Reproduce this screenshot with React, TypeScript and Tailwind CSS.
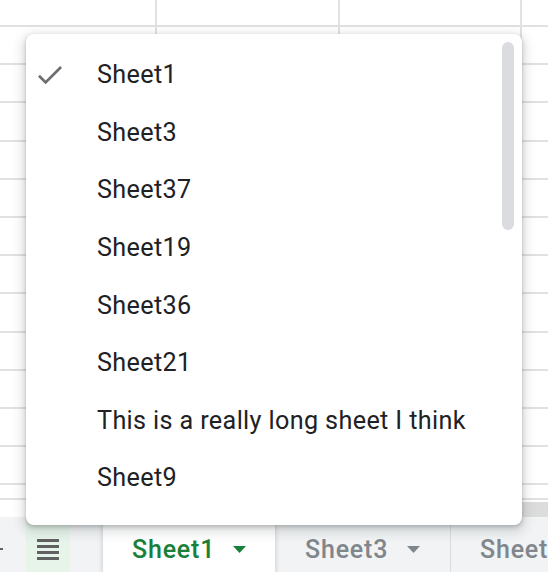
import React from "react";

const rows = Array.from({ length: 12 });
const items = [
  "Sheet1",
  "Sheet3",
  "Sheet37",
  "Sheet19",
  "Sheet36",
  "Sheet21",
  "This is a really long sheet I think",
  "Sheet9",
];

function GridRow({ first }: { first?: boolean }) {
  return (
    <div className={`flex shrink-0 border-b-2 border-[#e1e1e1] ${first ? "h-[27px]" : "h-[38.2px]"}`}>
      <div className="w-[157px] shrink-0 border-r-2 border-[#e1e1e1]" />
      <div className="w-[183px] shrink-0 border-r-2 border-[#e1e1e1]" />
      <div className="w-[182px] shrink-0 border-r-2 border-[#e1e1e1]" />
      <div className="flex-1" />
    </div>
  );
}

function Caret({ color }: { color: string }) {
  return (
    <svg width="13" height="7" viewBox="0 0 13 7" className="shrink-0">
      <path d="M0 0 L13 0 L6.5 7 Z" fill={color} />
    </svg>
  );
}

export default function App() {
  return (
    <div className="relative w-[548px] h-[572px] bg-white overflow-hidden font-['Roboto',sans-serif]">
      {/* grid */}
      <div className="flex h-[500px] flex-col overflow-hidden border-b-2 border-[#e1e1e1]">
        <GridRow first />
        {rows.map((_, i) => (
          <GridRow key={i} />
        ))}
      </div>
      {/* horizontal scrollbar strip */}
      <div className="h-[17px] pt-[2px]">
        <div className="ml-[300px] h-[15px] bg-[#dcdcdc]" />
      </div>
      {/* tab bar */}
      <div className="flex h-[55px] overflow-hidden bg-[#f1f3f4]">
        <div className="flex w-[26px] shrink-0 items-center pt-[9px]">
          <div className="h-[2px] w-[3px] bg-[#5f6368]" />
        </div>
        <div className="flex w-[44px] shrink-0 items-center justify-center bg-[#e6f4ea] pt-[9px]">
          <div className="flex w-[22px] flex-col gap-[3px]">
            <div className="h-[3px] bg-[#616161]" />
            <div className="h-[3px] bg-[#616161]" />
            <div className="h-[3px] bg-[#616161]" />
            <div className="h-[3px] bg-[#616161]" />
          </div>
        </div>
        <div className="w-[33px] shrink-0" />
        <div className="relative z-10 flex w-[172px] shrink-0 items-center gap-[18px] bg-white pl-[29px] pt-[9px] shadow-[0_1px_4px_1px_rgba(60,64,67,0.18)]">
          <span className="text-[25px] font-medium leading-none tracking-[0.8px] text-[#188038]">Sheet1</span>
          <Caret color="#188038" />
        </div>
        <div className="flex w-[176px] shrink-0 items-center gap-[19px] border-r border-[#dadce0] pl-[30px] pt-[9px]">
          <span className="text-[25px] font-medium leading-none tracking-[0.8px] text-[#80868b]">Sheet3</span>
          <Caret color="#80868b" />
        </div>
        <div className="flex shrink-0 items-center pl-[29px] pt-[9px]">
          <span className="whitespace-nowrap text-[25px] font-medium leading-none tracking-[0.8px] text-[#80868b]">Sheet</span>
        </div>
      </div>

      {/* dropdown menu */}
      <div className="absolute left-[26px] top-[34px] z-20 h-[491px] w-[496px] overflow-hidden rounded-[8px] bg-white shadow-[0_4px_11px_4px_rgba(60,64,67,0.15),0_2px_4px_0_rgba(60,64,67,0.3)]">
        <div className="flex flex-col pt-[12px]">
          {items.map((name, i) => (
            <div key={name} className="flex h-[57.6px] shrink-0 items-center">
              <div className="flex w-[71px] shrink-0 items-center pl-[12px]">
                {i === 0 && (
                  <svg width="24" height="18.3" viewBox="3.41 5.59 17.59 13.41">
                    <path d="M9 16.17L4.83 12l-1.42 1.41L9 19 21 7l-1.41-1.41z" fill="#6b6f73" />
                  </svg>
                )}
              </div>
              <span className="whitespace-nowrap text-[25.2px] leading-none tracking-[0.36px] text-[#202124]">{name}</span>
            </div>
          ))}
        </div>
        <div className="absolute right-[8px] top-[8px] h-[188px] w-[12px] rounded-full bg-[#dadce0]" />
      </div>
    </div>
  );
}
